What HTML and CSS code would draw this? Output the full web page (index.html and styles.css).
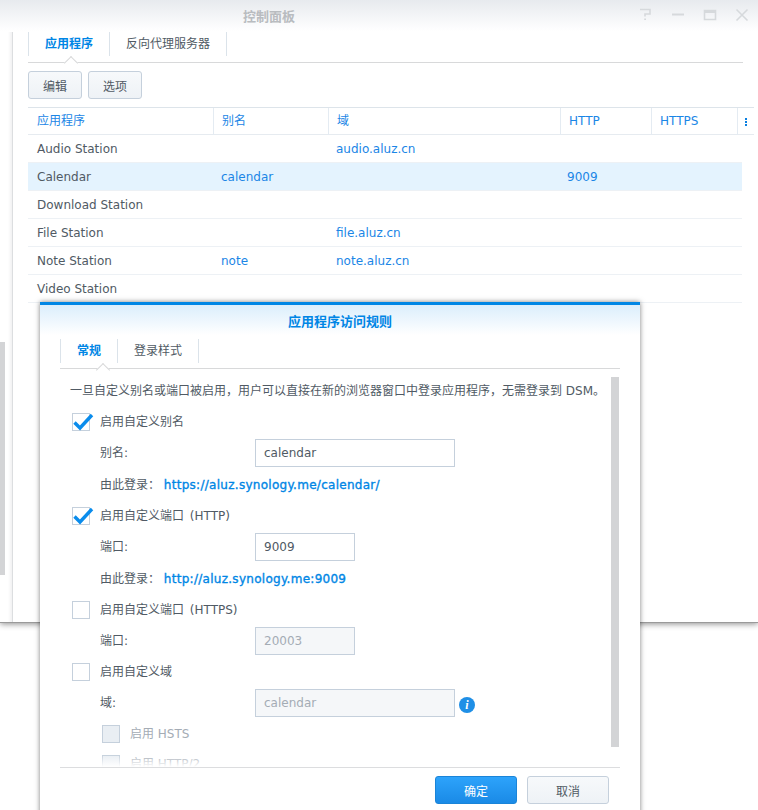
FILE: index.html
```html
<!DOCTYPE html>
<html lang="zh-CN">
<head>
<meta charset="utf-8">
<title>控制面板</title>
<link rel="stylesheet" href="styles.css">
</head>
<body>
<div class="win">
  <header class="titlebar">
    <span class="wtitle">控制面板</span>
    <div class="wbtns">
      <svg class="wb" width="16" height="14" viewBox="0 0 16 14"><path d="M2 1.500h10v4.500H7v2.500" fill="none" stroke="#d6d9dc" stroke-width="1.600"/><path d="M6.200 10.500h1.800v1.600H6.200z" fill="#d6d9dc"/></svg>
      <svg class="wb" width="16" height="14" viewBox="0 0 16 14"><path d="M2 6.500h12" stroke="#d6d9dc" stroke-width="2"/></svg>
      <svg class="wb" width="16" height="14" viewBox="0 0 16 14"><path d="M2.500 2.500h11v9h-11z" fill="none" stroke="#d6d9dc" stroke-width="1.600"/><path d="M2 2h12v3H2z" fill="#d6d9dc"/></svg>
      <svg class="wb" width="16" height="14" viewBox="0 0 16 14"><path d="M2.500 1.500l11 11M13.500 1.500l-11 11" stroke="#d6d9dc" stroke-width="1.600"/></svg>
    </div>
  </header>
  <div class="winbody">
    <div class="sidebar"><div class="sidethumb"></div></div>
    <main class="content">
      <nav class="tabs">
        <span class="tab on">应用程序</span><span class="tab">反向代理服务器</span>
      </nav>
      <div class="toolbar">
        <button class="btn">编辑</button><button class="btn">选项</button>
      </div>
      <div class="grid head">
        <span class="c c1">应用程序</span><span class="c c2">别名</span><span class="c c3">域</span><span class="c c4">HTTP</span><span class="c c5">HTTPS</span><span class="c c6"><i class="dots"></i></span>
      </div>
      <div class="grid row"><span class="c c1">Audio Station</span><span class="c c2"></span><span class="c c3 lnk">audio.aluz.cn</span><span class="c c4"></span><span class="c c5"></span></div>
      <div class="grid row sel"><span class="c c1">Calendar</span><span class="c c2 lnk">calendar</span><span class="c c3"></span><span class="c c4 lnk">9009</span><span class="c c5"></span></div>
      <div class="grid row"><span class="c c1">Download Station</span></div>
      <div class="grid row"><span class="c c1">File Station</span><span class="c c2"></span><span class="c c3 lnk">file.aluz.cn</span></div>
      <div class="grid row"><span class="c c1">Note Station</span><span class="c c2 lnk">note</span><span class="c c3 lnk">note.aluz.cn</span></div>
      <div class="grid row"><span class="c c1">Video Station</span></div>
    </main>
  </div>
</div>

<section class="dialog">
  <div class="dtitle">应用程序访问规则</div>
  <nav class="tabs dtabs">
    <span class="tab on">常规</span><span class="tab">登录样式</span>
  </nav>
  <div class="dscroll">
    <div class="dform">
      <p class="intro">一旦自定义别名或端口被启用，用户可以直接在新的浏览器窗口中登录应用程序，无需登录到 DSM。</p>
      <label class="chk"><span class="box"><svg width="22" height="20" viewBox="0 0 22 20"><path d="M2.500 9.500l5.500 5.500L20 2" fill="none" stroke="#0a8cec" stroke-width="3.400"/></svg></span>启用自定义别名</label>
      <div class="field"><span class="flabel">别名:</span><span class="inp wide">calendar</span></div>
      <div class="via">由此登录： <a>https://aluz.synology.me/calendar/</a></div>
      <label class="chk"><span class="box"><svg width="22" height="20" viewBox="0 0 22 20"><path d="M2.500 9.500l5.500 5.500L20 2" fill="none" stroke="#0a8cec" stroke-width="3.400"/></svg></span>启用自定义端口 (HTTP)</label>
      <div class="field"><span class="flabel">端口:</span><span class="inp">9009</span></div>
      <div class="via">由此登录： <a>http://aluz.synology.me:9009</a></div>
      <label class="chk"><span class="box"></span>启用自定义端口 (HTTPS)</label>
      <div class="field"><span class="flabel">端口:</span><span class="inp off">20003</span></div>
      <label class="chk c3rd"><span class="box"></span>启用自定义域</label>
      <div class="field"><span class="flabel">域:</span><span class="inp wide off">calendar</span>
        <svg class="info" width="16" height="16" viewBox="0 0 16 16"><circle cx="8" cy="8" r="8" fill="#1f8fe6"/><text x="8" y="12" text-anchor="middle" class="infot">i</text></svg>
      </div>
      <label class="chk sub"><span class="box dis"></span>启用 HSTS</label>
      <label class="chk sub"><span class="box dis"></span>启用 HTTP/2</label>
    </div>
    <div class="dbar"></div>
  </div>
  <footer class="dfoot">
    <button class="dbtn primary">确定</button><button class="dbtn">取消</button>
  </footer>
</section>
</body>
</html>
```
FILE: styles.css
```css
* { box-sizing: border-box; }
html, body { margin: 0; padding: 0; }
body {
  width: 758px; height: 810px; overflow: hidden; position: relative; background: #fff;
  font-family: "DejaVu Sans", "Noto Sans CJK SC", sans-serif;
  font-size: 12px; color: #505a64;
}
.win { height: 622px; background: #fff; box-shadow: 0 1px 0 #9a9a9a, 0 2px 6px rgba(0,0,0,.45); }
.titlebar {
  height: 32px; position: relative; display: flex; justify-content: center; align-items: center;
  background: linear-gradient(#e7eaee, #fdfdfe 88%, #fff);
}
.wtitle { font-size: 13px; font-weight: bold; color: #b9bcc0; position: relative; left: -110px; top: -1px; }
.wbtns { position: absolute; right: 8px; top: 8px; display: flex; gap: 16px; }
.winbody { display: flex; height: 590px; }
.sidebar {
  width: 13px; flex: none; padding-top: 310px; border-right: 1px solid #dcdee0;
  background: linear-gradient(to right, #fff 8px, #f1f1f2);
}
.sidethumb { width: 5px; height: 233px; background: #d3d4d6; }
.content { width: 730px; padding-left: 15px; }
.tabs { display: flex; height: 31px; border-bottom: 1px solid #d8d9da; padding-bottom: 6px; position: relative; }
.tab { padding: 0 16px; border-right: 1px solid #dbe3ea; line-height: 24px; }
.tab:first-child { border-left: 1px solid #dbe3ea; }
.tab.on { color: #0086e5; font-weight: bold; position: relative; }
.tab.on::after {
  content: ""; position: absolute; left: 37px; top: 26px; width: 9px; height: 9px; transform: rotate(45deg);
  background: #fff; border-left: 1px solid #d8d9da; border-top: 1px solid #d8d9da;
}
.toolbar { display: flex; gap: 6px; padding-top: 8px; height: 44px; }
.btn {
  width: 54px; height: 28px; font: inherit; color: #505a64; padding: 0;
  border: 1px solid #c5d0dc; border-radius: 3px; background: linear-gradient(#f7f9fb, #eef2f6);
}
.grid { display: grid; grid-template-columns: 186px 115px 232px 91px 86px 16px; width: 714px; height: 28px; align-items: center; }
.grid.head { width: 726px; border-top: 1px solid #dde4ea; border-bottom: 1px solid #e6ebf0; color: #1b86e6; }
.head .c { height: 100%; line-height: 27px; border-right: 1px solid #e4ebf2; }
.head .c6 { border: none; display: flex; align-items: center; justify-content: center; padding: 0; }
.dots { display: block; width: 2px; height: 8px; background: repeating-linear-gradient(#0a7fe0 0 2px, #fff 2px 3px); }
.c { padding-left: 9px; white-space: nowrap; font-size: 12px; }
.c2 { padding-left: 7px; }
.c3 { padding-left: 7px; }
.c4 { padding-left: 6px; }
.head .c2, .head .c3, .head .c4, .head .c5 { padding-left: 8px; }
.row { border-bottom: 1px solid #edf1f5; }
.sel { background: #e4f3fe; }
.lnk { color: #1b86e6; }

.dialog {
  position: absolute; left: 40px; top: 302px; width: 600px; height: 520px; background: #fff;
  border-top: 3px solid #0086e5; box-shadow: 0 0 5px rgba(0,0,0,.5);
  padding: 0 20px;
}
.dtitle {
  margin: 0 -20px; height: 30px; line-height: 34px; text-align: center; font-weight: bold; color: #0086e5; font-size: 13px;
  background: linear-gradient(#dbeefc, #fff);
}
.dtabs { height: 34px; padding-top: 4px; padding-bottom: 0; }
.dtabs .tab { line-height: 24px; height: 24px; }
.dscroll { display: flex; height: 399px; overflow: hidden; position: relative; border-bottom: 1px solid #dcdddf; }
.dscroll::after {
  content: ""; position: absolute; left: 0; right: 0; bottom: 0; height: 12px;
  background: linear-gradient(rgba(255,255,255,0), #fff);
}
.dform { width: 550px; padding: 12px 0 0 10px; }
.intro { margin: 0 0 12px; line-height: 20px; white-space: nowrap; font-size: 12px; }
.chk { display: flex; align-items: flex-start; height: 18px; padding-left: 2px; gap: 10px; line-height: 18px; word-spacing: 2px; }
.box { width: 18px; height: 18px; border: 1px solid #c5d0dc; flex: none; display: block; position: relative; }
.box svg { position: absolute; left: -1px; top: -1px; }
.box.dis { background: #e9eef3; }
.field { display: flex; align-items: center; height: 28px; margin-top: 8px; padding-left: 30px; }
.flabel { width: 155px; padding-bottom: 4px; }
.inp { width: 100px; height: 28px; line-height: 26px; border: 1px solid #c5d0dc; padding-left: 8px; }
.inp.wide { width: 200px; }
.inp.off { background: #f5f7f9; color: #a4acb5; }
.via { height: 18px; margin-top: 8px; margin-bottom: 14px; padding-left: 30px; line-height: 20px; }
.via a { color: #0086e5; -webkit-text-stroke: .35px #0086e5; letter-spacing: .28px; }
.info { margin: 4px 0 0 4px; }
.infot { font-size: 12px; font-weight: bold; font-style: italic; fill: #fff; font-family: "Liberation Serif", serif; }
.sub { padding-left: 32px; color: #a4acb5; margin-top: 8px; word-spacing: 0; }
.sub + .sub { margin-top: 12px; }
.c3rd { margin-top: 8px; }
.dbar { position: absolute; left: 551px; top: 8px; width: 8px; height: 370px; background: #d3d4d6; }
.dfoot { display: flex; justify-content: flex-end; gap: 10px; padding: 8px 11px 0 0; }
.dbtn { width: 82px; height: 28px; font: inherit; color: #505a64; padding: 0; border: 1px solid #c5d0dc; border-radius: 3px; background: linear-gradient(#f7f9fb, #eef2f6); }
.dbtn.primary { color: #fff; border-color: #1a84d8; background: linear-gradient(#2da3fb, #1a8ae6); }
```
